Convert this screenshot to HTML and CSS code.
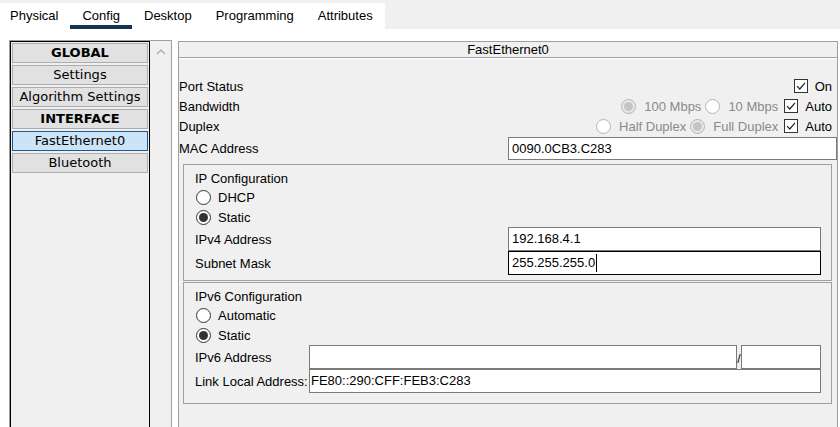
FILE: index.html
```html
<!DOCTYPE html>
<html>
<head>
<meta charset="utf-8">
<link rel="stylesheet" href="styles.css">
</head>
<body>
<div class="tabbar">
  <div class="tabs">
    <div class="tab first">Physical</div>
    <div class="tab active">Config</div>
    <div class="tab">Desktop</div>
    <div class="tab">Programming</div>
    <div class="tab">Attributes</div>
  </div>
</div>
<div class="main">
  <div class="sidebar">
    <div class="list">
      <div class="item head">GLOBAL</div>
      <div class="item">Settings</div>
      <div class="item">Algorithm Settings</div>
      <div class="item head">INTERFACE</div>
      <div class="item selected">FastEthernet0</div>
      <div class="item">Bluetooth</div>
    </div>
    <div class="scroll">
      <svg class="chev" width="10" height="7" viewBox="0 0 10 7"><path d="M1 6 L5 2 L9 6" fill="none" stroke="#b0b0b0" stroke-width="1.5"/></svg>
    </div>
  </div>
  <div class="panel">
    <div class="panel-head">FastEthernet0</div>
    <div class="panel-body">
      <div class="row">
        <span>Port Status</span>
        <span class="opts">
          <svg class="chk" width="14" height="14" viewBox="0 0 14 14"><rect x="0.5" y="0.5" width="13" height="13" fill="#fff" stroke="#333"/><path d="M3 7.2 L5.8 10 L11 3.8" fill="none" stroke="#222" stroke-width="1.2"/></svg>
          <span class="chk-label">On</span>
        </span>
      </div>
      <div class="row">
        <span>Bandwidth</span>
        <span class="opts">
          <span class="radio dis checked"></span><span class="dim">100 Mbps</span>
          <span class="radio dis sp"></span><span class="dim">10 Mbps</span>
          <svg class="chk" width="14" height="14" viewBox="0 0 14 14"><rect x="0.5" y="0.5" width="13" height="13" fill="#fff" stroke="#333"/><path d="M3 7.2 L5.8 10 L11 3.8" fill="none" stroke="#222" stroke-width="1.2"/></svg>
          <span class="chk-label">Auto</span>
        </span>
      </div>
      <div class="row">
        <span>Duplex</span>
        <span class="opts">
          <span class="radio dis"></span><span class="dim">Half Duplex</span>
          <span class="radio dis checked sp"></span><span class="dim">Full Duplex</span>
          <svg class="chk" width="14" height="14" viewBox="0 0 14 14"><rect x="0.5" y="0.5" width="13" height="13" fill="#fff" stroke="#333"/><path d="M3 7.2 L5.8 10 L11 3.8" fill="none" stroke="#222" stroke-width="1.2"/></svg>
          <span class="chk-label">Auto</span>
        </span>
      </div>
      <div class="row mac">
        <span>MAC Address</span>
        <div class="field mac-field">0090.0CB3.C283</div>
      </div>

      <div class="group g1">
        <div class="glabel">IP Configuration</div>
        <div class="rrow"><span class="radio"></span><span>DHCP</span></div>
        <div class="rrow"><span class="radio checked"></span><span>Static</span></div>
        <div class="frow">
          <span class="flabel w4">IPv4 Address</span>
          <div class="field f4">192.168.4.1</div>
        </div>
        <div class="frow">
          <span class="flabel w4">Subnet Mask</span>
          <div class="field f4 focus">255.255.255.0<span class="caret"></span></div>
        </div>
      </div>

      <div class="group g2">
        <div class="glabel">IPv6 Configuration</div>
        <div class="rrow"><span class="radio"></span><span>Automatic</span></div>
        <div class="rrow"><span class="radio checked"></span><span>Static</span></div>
        <div class="frow">
          <span class="flabel w6">IPv6 Address</span>
          <div class="field f6"></div>
          <span class="slash">/</span>
          <div class="field fpre"></div>
        </div>
        <div class="frow">
          <span class="flabel w6">Link Local Address:</span>
          <div class="field fll">FE80::290:CFF:FEB3:C283</div>
        </div>
      </div>
    </div>
  </div>
</div>
</body>
</html>
```

FILE: styles.css
```css
html, body {
  margin: 0;
  padding: 0;
  background: #ffffff;
  overflow: hidden;
  font-family: "Liberation Sans", Arial, sans-serif;
  font-size: 13px;
  color: #000;
}

.tabbar {
  height: 29px;
  background: #f0f0f0;
  display: flex;
  align-items: flex-end;
}

.tabs {
  display: flex;
  background: #ffffff;
  height: 26px;
}

.tab {
  padding: 4px 12px 0 12px;
  line-height: 18px;
  height: 18px;
  border-bottom: 4px solid transparent;
}
.tab.first { padding-left: 10px; }
.tab.active { border-bottom-color: #173353; }

.main {
  box-sizing: border-box;
  display: flex;
  gap: 6px;
  padding: 11px 0 0 9px;
  height: 398px;
}

.sidebar {
  display: flex;
  width: 161px;
  border: 1px solid #a0a0a0;
  border-bottom: none;
  background: #f0f0f0;
}

.list {
  width: 138px;
  border: 1px solid #000;
  border-bottom: none;
  padding: 1px 0 0 1px;
  display: flex;
  flex-direction: column;
  gap: 2px;
  font-family: "DejaVu Sans", Verdana, sans-serif;
  font-size: 13px;
}

.item {
  width: 134px;
  height: 18px;
  line-height: 18px;
  text-align: center;
  background: #e1e1e1;
  border: 1px solid #adadad;
}
.item.head { font-weight: bold; }
.item.selected {
  background: #cce4f7;
  border-color: #1a5a96;
}

.scroll {
  width: 21px;
  display: flex;
  justify-content: center;
  padding-top: 7px;
  box-sizing: border-box;
}
.chev { display: block; }

.panel {
  margin-top: 1px;
  width: 658px;
  border: 1px solid #a0a0a0;
  border-bottom: none;
  background: #f0f0f0;
}

.panel-head {
  height: 15px;
  line-height: 15px;
  text-align: center;
  border-bottom: 1px solid #a0a0a0;
}

.panel-body {
  border-top: 1px solid #ffffff;
  padding-top: 17px;
}

.row {
  height: 20px;
  display: flex;
  align-items: center;
  justify-content: space-between;
}

.opts {
  display: flex;
  align-items: center;
  padding-right: 5px;
}

.chk { display: block; margin-left: 6px; }
.chk-label { margin-left: 7px; }

.dim { color: #8a8a8a; }

.radio {
  width: 13px;
  height: 13px;
  border: 1px solid #333;
  border-radius: 50%;
  background: #ffffff;
  position: relative;
  flex: none;
  margin-right: 8px;
}
.radio.sp { margin-left: 4px; }
.radio.checked::after {
  content: "";
  position: absolute;
  left: 2px;
  top: 2px;
  width: 9px;
  height: 9px;
  border-radius: 50%;
  background: #333;
}
.radio.dis { border-color: #b4b4b4; }
.radio.dis.checked { background: #e8e8e8; }
.radio.dis.checked::after { background: #c4c4c4; }

.row.mac { height: 23px; margin-top: 1px; }

.field {
  box-sizing: border-box;
  height: 24px;
  line-height: 22px;
  border: 1px solid #7a7a7a;
  background: #ffffff;
  padding-left: 3px;
  white-space: nowrap;
  display: flex;
  align-items: center;
}
.mac-field { width: 329px; height: 23px; }

.group {
  margin: 4px 5px 0 4px;
  border: 1px solid #a0a0a0;
  padding: 6px 10px 5px 11px;
}
.group.g2 {
  margin-top: 1px;
  padding-bottom: 10px;
}

.glabel {
  line-height: 16px;
  height: 16px;
}

.rrow {
  height: 20px;
  display: flex;
  align-items: center;
  padding-left: 1px;
}
.rrow .radio { margin-right: 7px; }

.frow {
  height: 24px;
  display: flex;
  align-items: center;
}

.flabel { flex: none; white-space: nowrap; }
.w4 { width: 313px; }
.w6 { width: 114px; }

.f4 { width: 313px; }
.f4.focus { border-color: #000; }
.f6 { width: 428px; }
.fpre { width: 80px; }
.fll { width: 512px; padding-left: 1px; }

.slash {
  width: 4px;
  text-align: center;
  font-size: 12px;
  line-height: 14px;
  padding-top: 4px;
}

.caret {
  display: inline-block;
  width: 1px;
  height: 18px;
  background: #000;
  margin-left: 1px;
}
```
